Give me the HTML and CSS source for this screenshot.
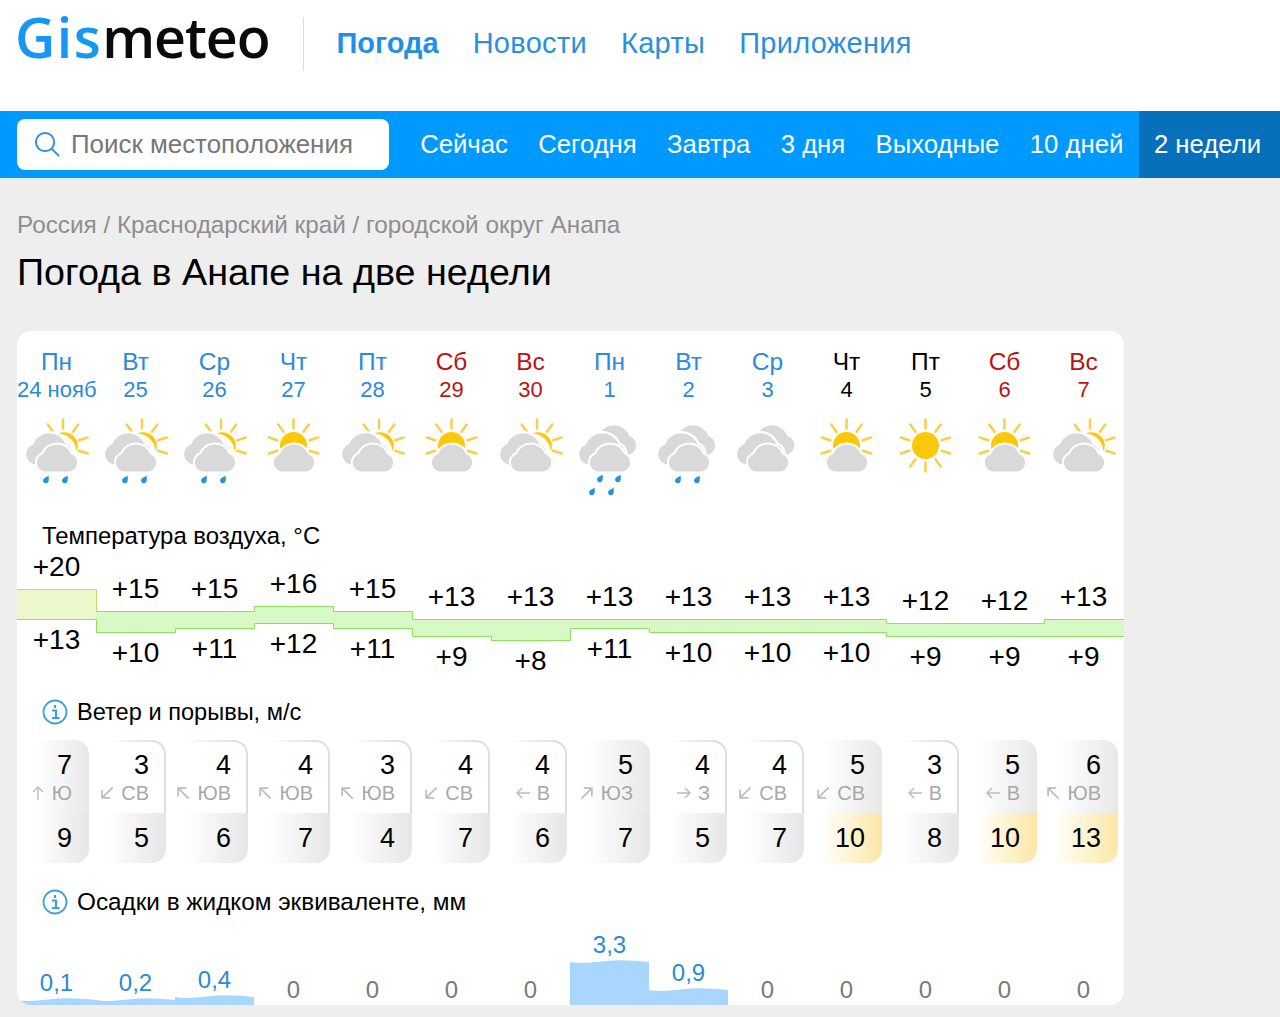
FILE: index.html
```html
<!DOCTYPE html>
<html lang="ru">
<head>
<meta charset="utf-8">
<title>Погода в Анапе на две недели</title>
<link rel="stylesheet" href="styles.css">
</head>
<body>
<svg class="defs" width="0" height="0" aria-hidden="true">
  <defs>
    <path id="cloud" d="M28 56.500A9 9 0 0 1 26 39A15 15 0 0 1 54 39A9 9 0 0 1 52 56.500Z"/>
    <path id="drop" d="M2.8-4.4C2.4-2.2 3.2-.8 2.6 1.1A2.8 2.8 0 1 1-2.6-.8C-1.6-2.6 1-3 2.8-4.4Z"/>
    <path id="ray" d="M0-17V-26"/>
    <g id="upper-rays" class="rays">
      <use href="#ray" transform="rotate(-108)"/><use href="#ray" transform="rotate(-72)"/><use href="#ray" transform="rotate(-36)"/><use href="#ray"/><use href="#ray" transform="rotate(36)"/><use href="#ray" transform="rotate(72)"/><use href="#ray" transform="rotate(108)"/>
    </g>
    <g id="partly" >
      <g class="rays" transform="translate(46 30.5)">
        <use href="#ray" transform="rotate(-36)"/><use href="#ray"/><use href="#ray" transform="rotate(36)"/><use href="#ray" transform="rotate(72)"/><use href="#ray" transform="rotate(108)"/>
      </g>
      <path class="sun" d="M41.5 18.5A13.5 13.5 0 0 1 59.5 36.5A19 19 0 0 0 41.5 18.5Z"/>
      <use href="#cloud" class="cloud" transform="translate(-13.7 -15.6) scale(1.15)"/>
      <use href="#cloud" class="cloud"/>
    </g>
    <g id="suncloud">
      <use href="#upper-rays" transform="translate(39.5 30.5)"/>
      <circle class="sun" cx="39.5" cy="30.5" r="13.5"/>
      <use href="#cloud" class="cloud"/>
    </g>
    <g id="clearsun">
      <use href="#upper-rays" transform="translate(39.5 30.5)"/>
      <g class="rays" transform="translate(39.5 30.5)"><use href="#ray" transform="rotate(144)"/><use href="#ray" transform="rotate(180)"/><use href="#ray" transform="rotate(-144)"/></g>
      <circle class="sun" cx="39.5" cy="30.5" r="13.5"/>
    </g>
    <g id="overcast">
      <use href="#cloud" class="cloud" transform="translate(0 -22) scale(1.1)"/>
      <use href="#cloud" class="cloud" transform="translate(-13.7 -15.6) scale(1.15)"/>
      <use href="#cloud" class="cloud"/>
    </g>
    <g id="two-drops" class="drops"><use href="#drop" x="29" y="65"/><use href="#drop" x="48" y="65"/></g>
    <g id="four-drops" class="drops"><use href="#drop" x="30" y="64"/><use href="#drop" x="48" y="64"/><use href="#drop" x="22" y="77"/><use href="#drop" x="41" y="77"/></g>
    <g id="info"><circle cx="13" cy="13" r="11.5"/><path class="info-i" d="M10 11.500H14V19M10 19H17.500M13 6V9"/></g>
    <path id="arrow" d="M8 15V2M3 7L8 2L13 7"/>
    <path id="wave" d="M0 2C12 4 22 2.500 36 1S62 .5 79 2V4H0Z"/>
  </defs>
</svg>

<header class="top">
  <a class="logo"><span class="logo-gis">Gis</span><span class="logo-meteo">meteo</span></a>
  <span class="top-divider"></span>
  <nav class="main-nav">
    <a class="main-link is-current">Погода</a>
    <a class="main-link">Новости</a>
    <a class="main-link">Карты</a>
    <a class="main-link">Приложения</a>
  </nav>
</header>

<div class="bar-nav">
  <div class="search">
    <svg class="search-icon" viewBox="0 0 28 28"><circle cx="11.500" cy="11.500" r="9.500"/><path d="M18.500 18.500L26 26"/></svg>
    <span class="search-text">Поиск местоположения</span>
  </div>
  <nav class="tabs">
    <a class="tab">Сейчас</a>
    <a class="tab">Сегодня</a>
    <a class="tab">Завтра</a>
    <a class="tab">3 дня</a>
    <a class="tab">Выходные</a>
    <a class="tab">10 дней</a>
    <a class="tab is-active">2 недели</a>
  </nav>
</div>

<main class="content">
  <p class="crumbs">Россия / Краснодарский край / городской округ Анапа</p>
  <h1 class="title">Погода в Анапе на две недели</h1>

  <section class="card">
    <div class="week days">
      <div class="day"><div class="dow">Пн</div><div class="date">24 нояб</div></div>
      <div class="day"><div class="dow">Вт</div><div class="date">25</div></div>
      <div class="day"><div class="dow">Ср</div><div class="date">26</div></div>
      <div class="day"><div class="dow">Чт</div><div class="date">27</div></div>
      <div class="day"><div class="dow">Пт</div><div class="date">28</div></div>
      <div class="day is-weekend"><div class="dow">Сб</div><div class="date">29</div></div>
      <div class="day is-weekend"><div class="dow">Вс</div><div class="date">30</div></div>
      <div class="day"><div class="dow">Пн</div><div class="date">1</div></div>
      <div class="day"><div class="dow">Вт</div><div class="date">2</div></div>
      <div class="day"><div class="dow">Ср</div><div class="date">3</div></div>
      <div class="day is-plain"><div class="dow">Чт</div><div class="date">4</div></div>
      <div class="day is-plain"><div class="dow">Пт</div><div class="date">5</div></div>
      <div class="day is-weekend"><div class="dow">Сб</div><div class="date">6</div></div>
      <div class="day is-weekend"><div class="dow">Вс</div><div class="date">7</div></div>
    </div>

    <div class="week icons">
      <svg class="wx" viewBox="0 0 79 85"><use href="#partly"/><use href="#two-drops"/></svg>
      <svg class="wx" viewBox="0 0 79 85"><use href="#partly"/><use href="#two-drops"/></svg>
      <svg class="wx" viewBox="0 0 79 85"><use href="#partly"/><use href="#two-drops"/></svg>
      <svg class="wx" viewBox="0 0 79 85"><use href="#suncloud"/></svg>
      <svg class="wx" viewBox="0 0 79 85"><use href="#partly"/></svg>
      <svg class="wx" viewBox="0 0 79 85"><use href="#suncloud"/></svg>
      <svg class="wx" viewBox="0 0 79 85"><use href="#partly"/></svg>
      <svg class="wx" viewBox="0 0 79 85"><use href="#overcast"/><use href="#four-drops"/></svg>
      <svg class="wx" viewBox="0 0 79 85"><use href="#overcast"/><use href="#two-drops"/></svg>
      <svg class="wx" viewBox="0 0 79 85"><use href="#overcast"/></svg>
      <svg class="wx" viewBox="0 0 79 85"><use href="#suncloud"/></svg>
      <svg class="wx" viewBox="0 0 79 85"><use href="#clearsun"/></svg>
      <svg class="wx" viewBox="0 0 79 85"><use href="#suncloud"/></svg>
      <svg class="wx" viewBox="0 0 79 85"><use href="#partly"/></svg>
    </div>

    <h2 class="label label-temp">Температура воздуха, °C</h2>
    <div class="chart">
      <svg class="chart-band" viewBox="0 0 1107 148" width="1107" height="148">
        <rect class="band-warm" x="0" y="39" width="79" height="30"/>
        <path class="band-cool" d="M79 61H237V56H316V61H395V69H869V73H1027V69H1107V86H869V82H632V78H553V90H474V86H395V78H316V73H237V78H158V82H79Z"/>
        <path class="line-warm" d="M0 39.500H79.500V61"/>
        <path class="line-cool" d="M79 61.500H237.500V56.500H316.500V61.500H395.500V69.500H869.500V73.500H1027.500V69.500H1107"/>
        <path class="line-cool" d="M0 69.500H79.500V82.500H158.500V78.500H237.500V73.500H316.500V78.500H395.500V86.500H474.500V90.500H553.500V78.500H632.500V82.500H869.500V86.500H1107"/>
      </svg>
      <div class="week temps">
        <div class="temp" style="--top:3px;--gap:45px"><span>+20</span><span>+13</span></div>
        <div class="temp" style="--top:25px;--gap:36px"><span>+15</span><span>+10</span></div>
        <div class="temp" style="--top:25px;--gap:32px"><span>+15</span><span>+11</span></div>
        <div class="temp" style="--top:20px;--gap:32px"><span>+16</span><span>+12</span></div>
        <div class="temp" style="--top:25px;--gap:32px"><span>+15</span><span>+11</span></div>
        <div class="temp" style="--top:33px;--gap:32px"><span>+13</span><span>+9</span></div>
        <div class="temp" style="--top:33px;--gap:36px"><span>+13</span><span>+8</span></div>
        <div class="temp" style="--top:33px;--gap:24px"><span>+13</span><span>+11</span></div>
        <div class="temp" style="--top:33px;--gap:28px"><span>+13</span><span>+10</span></div>
        <div class="temp" style="--top:33px;--gap:28px"><span>+13</span><span>+10</span></div>
        <div class="temp" style="--top:33px;--gap:28px"><span>+13</span><span>+10</span></div>
        <div class="temp" style="--top:37px;--gap:28px"><span>+12</span><span>+9</span></div>
        <div class="temp" style="--top:37px;--gap:28px"><span>+12</span><span>+9</span></div>
        <div class="temp" style="--top:33px;--gap:32px"><span>+13</span><span>+9</span></div>
      </div>
    </div>

    <h2 class="label label-wind"><svg class="info" viewBox="0 0 26 26"><use href="#info"/></svg>Ветер и порывы, м/с</h2>
    <div class="wind">
      <div class="w-cell"><div class="w-top is-grey"><div class="w-speed">7</div><div class="w-dir"><svg class="arrow to-n" viewBox="0 0 16 16"><use href="#arrow"/></svg>Ю</div></div><div class="w-gust">9</div></div>
      <div class="w-cell"><div class="w-top"><div class="w-speed">3</div><div class="w-dir"><svg class="arrow to-sw" viewBox="0 0 16 16"><use href="#arrow"/></svg>СВ</div></div><div class="w-gust">5</div></div>
      <div class="w-cell"><div class="w-top"><div class="w-speed">4</div><div class="w-dir"><svg class="arrow to-nw" viewBox="0 0 16 16"><use href="#arrow"/></svg>ЮВ</div></div><div class="w-gust">6</div></div>
      <div class="w-cell"><div class="w-top"><div class="w-speed">4</div><div class="w-dir"><svg class="arrow to-nw" viewBox="0 0 16 16"><use href="#arrow"/></svg>ЮВ</div></div><div class="w-gust">7</div></div>
      <div class="w-cell"><div class="w-top"><div class="w-speed">3</div><div class="w-dir"><svg class="arrow to-nw" viewBox="0 0 16 16"><use href="#arrow"/></svg>ЮВ</div></div><div class="w-gust">4</div></div>
      <div class="w-cell"><div class="w-top"><div class="w-speed">4</div><div class="w-dir"><svg class="arrow to-sw" viewBox="0 0 16 16"><use href="#arrow"/></svg>СВ</div></div><div class="w-gust">7</div></div>
      <div class="w-cell"><div class="w-top"><div class="w-speed">4</div><div class="w-dir"><svg class="arrow to-w" viewBox="0 0 16 16"><use href="#arrow"/></svg>В</div></div><div class="w-gust">6</div></div>
      <div class="w-cell"><div class="w-top is-grey"><div class="w-speed">5</div><div class="w-dir"><svg class="arrow to-ne" viewBox="0 0 16 16"><use href="#arrow"/></svg>ЮЗ</div></div><div class="w-gust">7</div></div>
      <div class="w-cell"><div class="w-top"><div class="w-speed">4</div><div class="w-dir"><svg class="arrow to-e" viewBox="0 0 16 16"><use href="#arrow"/></svg>З</div></div><div class="w-gust">5</div></div>
      <div class="w-cell"><div class="w-top"><div class="w-speed">4</div><div class="w-dir"><svg class="arrow to-sw" viewBox="0 0 16 16"><use href="#arrow"/></svg>СВ</div></div><div class="w-gust">7</div></div>
      <div class="w-cell"><div class="w-top is-grey"><div class="w-speed">5</div><div class="w-dir"><svg class="arrow to-sw" viewBox="0 0 16 16"><use href="#arrow"/></svg>СВ</div></div><div class="w-gust is-strong">10</div></div>
      <div class="w-cell"><div class="w-top"><div class="w-speed">3</div><div class="w-dir"><svg class="arrow to-w" viewBox="0 0 16 16"><use href="#arrow"/></svg>В</div></div><div class="w-gust">8</div></div>
      <div class="w-cell"><div class="w-top is-grey"><div class="w-speed">5</div><div class="w-dir"><svg class="arrow to-w" viewBox="0 0 16 16"><use href="#arrow"/></svg>В</div></div><div class="w-gust is-strong">10</div></div>
      <div class="w-cell"><div class="w-top is-grey"><div class="w-speed">6</div><div class="w-dir"><svg class="arrow to-nw" viewBox="0 0 16 16"><use href="#arrow"/></svg>ЮВ</div></div><div class="w-gust is-strong">13</div></div>
    </div>

    <h2 class="label label-rain"><svg class="info" viewBox="0 0 26 26"><use href="#info"/></svg>Осадки в жидком эквиваленте, мм</h2>
    <div class="week rain">
      <div class="r-col"><span class="r-val">0,1</span><svg class="r-wave" viewBox="0 0 79 4" preserveAspectRatio="none"><use href="#wave"/></svg><div class="r-bar" style="height:3px"></div></div>
      <div class="r-col"><span class="r-val">0,2</span><svg class="r-wave" viewBox="0 0 79 4" preserveAspectRatio="none"><use href="#wave"/></svg><div class="r-bar" style="height:3px"></div></div>
      <div class="r-col"><span class="r-val">0,4</span><svg class="r-wave" viewBox="0 0 79 4" preserveAspectRatio="none"><use href="#wave"/></svg><div class="r-bar" style="height:6px"></div></div>
      <div class="r-col"><span class="r-zero">0</span></div>
      <div class="r-col"><span class="r-zero">0</span></div>
      <div class="r-col"><span class="r-zero">0</span></div>
      <div class="r-col"><span class="r-zero">0</span></div>
      <div class="r-col"><span class="r-val">3,3</span><svg class="r-wave" viewBox="0 0 79 4" preserveAspectRatio="none"><use href="#wave"/></svg><div class="r-bar" style="height:41px"></div></div>
      <div class="r-col"><span class="r-val">0,9</span><svg class="r-wave" viewBox="0 0 79 4" preserveAspectRatio="none"><use href="#wave"/></svg><div class="r-bar" style="height:13px"></div></div>
      <div class="r-col"><span class="r-zero">0</span></div>
      <div class="r-col"><span class="r-zero">0</span></div>
      <div class="r-col"><span class="r-zero">0</span></div>
      <div class="r-col"><span class="r-zero">0</span></div>
      <div class="r-col"><span class="r-zero">0</span></div>
    </div>
  </section>
</main>
</body>
</html>
```
FILE: styles.css
```css
* { box-sizing: border-box; }
html, body { margin: 0; padding: 0; }
body {
  height: 1017px;
  overflow: hidden;
  background: #eeeeee;
  color: #000;
  font-family: "Liberation Sans", Arial, sans-serif;
}
.defs { position: absolute; }

/* header */
.top {
  display: flex;
  align-items: flex-start;
  height: 111px;
  padding-left: 15px;
  background: #fff;
}
.logo {
  flex: none;
  font-family: "Open Sans", sans-serif;
  font-size: 55.5px;
  font-weight: 600;
  line-height: 74px;
  white-space: nowrap;
  color: #0a0a0a;
}
.logo-gis { color: #1497f5; letter-spacing: 1.500px; }
.logo-meteo { letter-spacing: -1.100px; }
.top-divider {
  flex: none;
  width: 1px;
  height: 54px;
  margin: 17px 33px 0 33px;
  background: #dcdcdc;
}
.main-nav { display: flex; gap: 34px; margin-top: 25px; }
.main-link {
  font-size: 29px;
  line-height: 36px;
  letter-spacing: .3px;
  color: #2b8fdc;
}
.main-link.is-current { font-weight: 700; letter-spacing: 0; color: #1f90e6; }

/* blue bar */
.bar-nav {
  display: flex;
  align-items: stretch;
  height: 67px;
  padding-left: 17px;
  background: #0099ff;
}
.search {
  display: flex;
  align-items: center;
  flex: none;
  width: 372px;
  height: 51px;
  margin-top: 8px;
  padding-left: 17px;
  background: #fff;
  border-radius: 8px;
}
.search-icon {
  width: 27px;
  height: 27px;
  fill: none;
  stroke: #2b8fdc;
  stroke-width: 2;
}
.search-text {
  margin-left: 10px;
  font-size: 25.900px;
  color: #777;
  white-space: nowrap;
}
.tabs { display: flex; flex: 1; margin-left: 16px; }
.tab {
  display: flex;
  align-items: center;
  padding: 0 15.200px;
  font-size: 25.700px;
  color: #fff;
  white-space: nowrap;
}
.tab.is-active {
  margin-left: auto;
  padding: 0 19px 0 15px;
  background: #0670bb;
}

/* headings */
.content { padding: 0 0 0 17px; }
.crumbs {
  margin: 32px 0 0;
  font-size: 24.300px;
  line-height: 30px;
  color: #8e8e8e;
}
.title {
  margin: 8px 0 0;
  font-size: 37.700px;
  font-weight: 400;
  line-height: 48px;
}

/* card */
.card {
  width: 1107px;
  height: 674px;
  margin-top: 35px;
  padding-top: 18px;
  overflow: hidden;
  background: #fff;
  border-radius: 14px;
}
.week {
  display: grid;
  grid-template-columns: repeat(14, 79px);
}
.day { text-align: center; color: #2b8ad9; white-space: nowrap; }
.day.is-weekend { color: #b81414; }
.day.is-plain { color: #000; }
.dow { font-size: 24.500px; line-height: 26px; }
.date { margin-top: 2px; font-size: 22px; line-height: 26px; }

/* weather icons */
.icons { margin-top: 12px; }
.wx { display: block; width: 79px; height: 85px; }
.cloud { fill: #d9d9d9; stroke: #fff; stroke-width: 4; paint-order: stroke; }
.sun { fill: #fdc70c; }
.rays { fill: none; stroke: #f6d04d; stroke-width: 2.500; stroke-linecap: round; }
.drops { fill: #2196d8; }

/* section labels */
.label {
  display: flex;
  align-items: center;
  height: 28px;
  margin: 0;
  padding-left: 25px;
  font-size: 23.900px;
  font-weight: 400;
  white-space: nowrap;
}
.label-temp { margin-top: 22px; }
.label-wind { font-size: 23.600px; }
.label-rain { margin-top: 25px; font-size: 24.300px; }
.info {
  flex: none;
  width: 26px;
  height: 26px;
  margin-right: 9px;
  fill: none;
  stroke: #3b9ee0;
  stroke-width: 1.800;
}
.info-i { stroke-width: 2.200; }

/* temperature chart */
.chart { position: relative; height: 148px; }
.chart-band { position: absolute; left: 0; top: 0; }
.band-warm { fill: #ecf8cc; }
.band-cool { fill: #d8f9c6; }
.line-warm { fill: none; stroke: #c6dd6a; stroke-width: 1; }
.line-cool { fill: none; stroke: #8ae25e; stroke-width: 1; }
.temps { position: relative; }
.temp {
  display: flex;
  flex-direction: column;
  align-items: center;
  margin-top: var(--top);
  font-size: 28px;
  line-height: 28px;
}
.temp span + span { margin-top: var(--gap); }

/* wind */
.wind {
  display: grid;
  grid-template-columns: 69px 77px 82px 82px 82px 78px 77px 83px 77px 77px 78px 77px 78px 81px;
  margin: 14px 0 0 3px;
}
.w-cell {
  display: flex;
  flex-direction: column;
  height: 123px;
  overflow: hidden;
  border-radius: 0 14px 14px 0;
}
.w-top {
  height: 74px;
  padding-top: 7px;
  border: 2px solid transparent;
  border-width: 2px 2px 0 0;
  border-radius: 0 14px 0 0;
  background: linear-gradient(#fff, #fff) padding-box, linear-gradient(90deg, #fff 25%, #dedede 85%) border-box;
}
.w-top.is-grey {
  background: linear-gradient(90deg, #fff 25%, #e8e8e8 100%) border-box;
}
.w-speed {
  padding-right: 15px;
  font-size: 27px;
  line-height: 32px;
  text-align: right;
}
.w-dir {
  display: flex;
  align-items: center;
  justify-content: flex-end;
  gap: 6px;
  padding-right: 15px;
  font-size: 20px;
  line-height: 24px;
  color: #a8a8a8;
}
.arrow {
  width: 16px;
  height: 16px;
  fill: none;
  stroke: #bdbdbd;
  stroke-width: 1.500;
}
.to-n { transform: rotate(0deg); }
.to-e { transform: rotate(90deg); }
.to-w { transform: rotate(-90deg); }
.to-ne { transform: rotate(45deg) scale(1.150); }
.to-nw { transform: rotate(-45deg) scale(1.150); }
.to-sw { transform: rotate(-135deg) scale(1.150); }
.w-gust {
  flex: 1;
  padding-right: 17px;
  font-size: 27px;
  line-height: 50px;
  text-align: right;
  background: linear-gradient(90deg, #fff 25%, #e6e6e6 100%);
}
.w-gust.is-strong {
  background: linear-gradient(90deg, #fff 20%, #fde7a6 100%);
}

/* precipitation */
.rain { height: 89px; }
.r-col {
  display: flex;
  flex-direction: column;
  align-items: center;
  justify-content: flex-end;
  height: 89px;
}
.r-val, .r-zero {
  font-size: 24px;
  line-height: 24px;
  margin-bottom: 3px;
}
.r-val { color: #2b8ad9; }
.r-zero { color: #7a7a7a; }
.r-wave { display: block; width: 79px; height: 4px; fill: #a8d6ff; }
.r-bar { width: 79px; background: #a8d6ff; }
```
